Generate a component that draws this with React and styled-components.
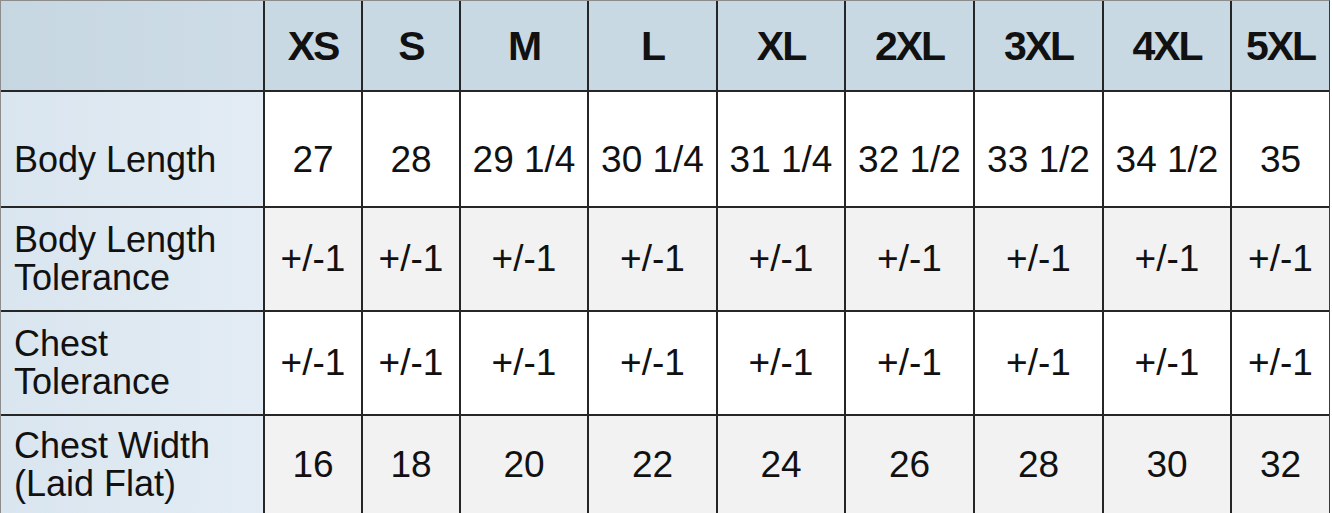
import React from "react";
import styled, { createGlobalStyle } from "styled-components";
// --------------------------
const GlobalStyle = createGlobalStyle`
  html, body {
    margin: 0;
    padding: 0;
    background: #ffffff;
  }
  body {
    font-family: "Liberation Sans", Arial, Helvetica, sans-serif;
    color: #111111;
  }
`;

const Chart = styled.div`
  display: grid;
  grid-template-columns: 262px 96px 96px 126px 127px 126px 127px 127px 126px 97px;
  grid-template-rows: 89px 114px 102px 102px 98px;
  gap: 2px;
  width: max-content;
  background: #262626;
  border-top: 1px solid #8c8c8c;
  border-left: 1px solid #8c8c8c;
  border-right: 1px solid #3a3a3a;
`;

const Corner = styled.div`
  background: linear-gradient(90deg, #c7d7e2 0%, #cddce6 100%);
`;

const HeaderCell = styled.div`
  display: flex;
  align-items: center;
  justify-content: center;
  background: #c9d9e3;
  font-size: 41px;
  font-weight: 700;
  letter-spacing: -2px;
  padding-top: 2px;
`;

const LabelCell = styled.div`
  display: flex;
  align-items: center;
  padding: ${({ $offset }) => ($offset ? `${$offset}px 0 0 13px` : "0 0 0 13px")};
  background: linear-gradient(90deg, #d9e5ef 0%, #e3ecf4 100%);
  font-size: 36px;
  line-height: 38px;
`;

const DataCell = styled.div`
  display: flex;
  align-items: center;
  justify-content: center;
  padding-top: ${({ $offset }) => ($offset ? `${$offset}px` : "0")};
  background: ${({ $shade }) => ($shade ? "#f2f2f2" : "#ffffff")};
  font-size: 37px;
  white-space: nowrap;
`;
// --------------------------

const sizes = ["XS", "S", "M", "L", "XL", "2XL", "3XL", "4XL", "5XL"];

const rows = [
  {
    label: ["Body Length"],
    values: ["27", "28", "29 1/4", "30 1/4", "31 1/4", "32 1/2", "33 1/2", "34 1/2", "35"],
    offset: 22,
  },
  {
    label: ["Body Length", "Tolerance"],
    values: Array(9).fill("+/-1"),
    shade: true,
  },
  {
    label: ["Chest", "Tolerance"],
    values: Array(9).fill("+/-1"),
  },
  {
    label: ["Chest Width", "(Laid Flat)"],
    values: ["16", "18", "20", "22", "24", "26", "28", "30", "32"],
    shade: true,
  },
];

const App = () => {
  return (
    <>
      <GlobalStyle />
      <Chart>
        <Corner />
        {sizes.map((s) => (
          <HeaderCell key={s}>{s}</HeaderCell>
        ))}
        {rows.map((row, i) => (
          <React.Fragment key={i}>
            <LabelCell $offset={row.offset}>
              <div>
                {row.label.map((line, j) => (
                  <div key={j}>{line}</div>
                ))}
              </div>
            </LabelCell>
            {row.values.map((v, j) => (
              <DataCell key={j} $shade={row.shade} $offset={row.offset}>
                {v}
              </DataCell>
            ))}
          </React.Fragment>
        ))}
      </Chart>
    </>
  );
};
// --------------------------
export default App;
